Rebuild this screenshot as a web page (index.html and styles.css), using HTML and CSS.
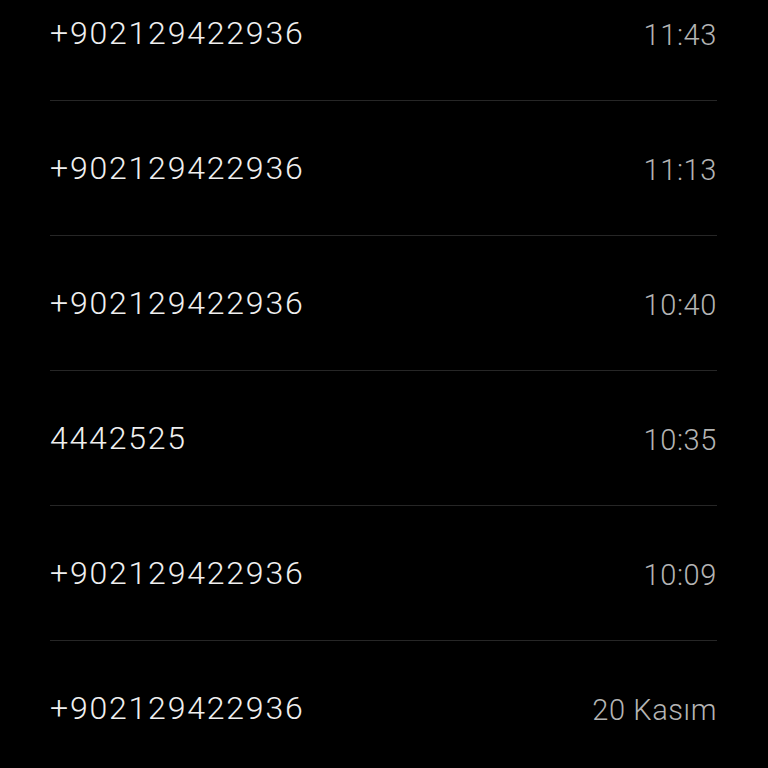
FILE: index.html
```html
<!DOCTYPE html>
<html lang="tr">
<head>
    <meta charset="UTF-8">
    <meta name="viewport" content="width=device-width, initial-scale=1.0">
    <title>Arama Geçmişi</title>
    <link rel="stylesheet" href="styles.css">
</head>
<body>
    <div class="container">
        <ul class="calls">
            <li class="call"><span class="number">+902129422936</span><span class="time">11:43</span></li>
            <li class="call"><span class="number">+902129422936</span><span class="time">11:13</span></li>
            <li class="call"><span class="number">+902129422936</span><span class="time">10:40</span></li>
            <li class="call"><span class="number">4442525</span><span class="time">10:35</span></li>
            <li class="call"><span class="number">+902129422936</span><span class="time">10:09</span></li>
            <li class="call"><span class="number">+902129422936</span><span class="time">20 Kasım</span></li>
        </ul>
    </div>
</body>
</html>
```

FILE: styles.css
```css
html, body {
    margin: 0;
    height: 100%;
    background: #000000;
    overflow: hidden;
}

body {
    font-family: Roboto, "Noto Sans", sans-serif;
    color: #e6e6e6;
}

.container {
    padding: 0 51px 0 50px;
}

.calls {
    list-style: none;
    margin: -34px 0 0 0;
    padding: 0;
}

.call {
    display: flex;
    justify-content: space-between;
    align-items: center;
    height: 134px;
    border-bottom: 1px solid #262626;
}

.call:last-child {
    border-bottom: none;
}

.number {
    font-size: 32px;
    font-weight: 300;
    letter-spacing: 1.8px;
    color: #f0f0f0;
}

.time {
    font-size: 29px;
    font-weight: 300;
    letter-spacing: 0.6px;
    color: #b4b4b4;
    padding-top: 3px;
}
```
